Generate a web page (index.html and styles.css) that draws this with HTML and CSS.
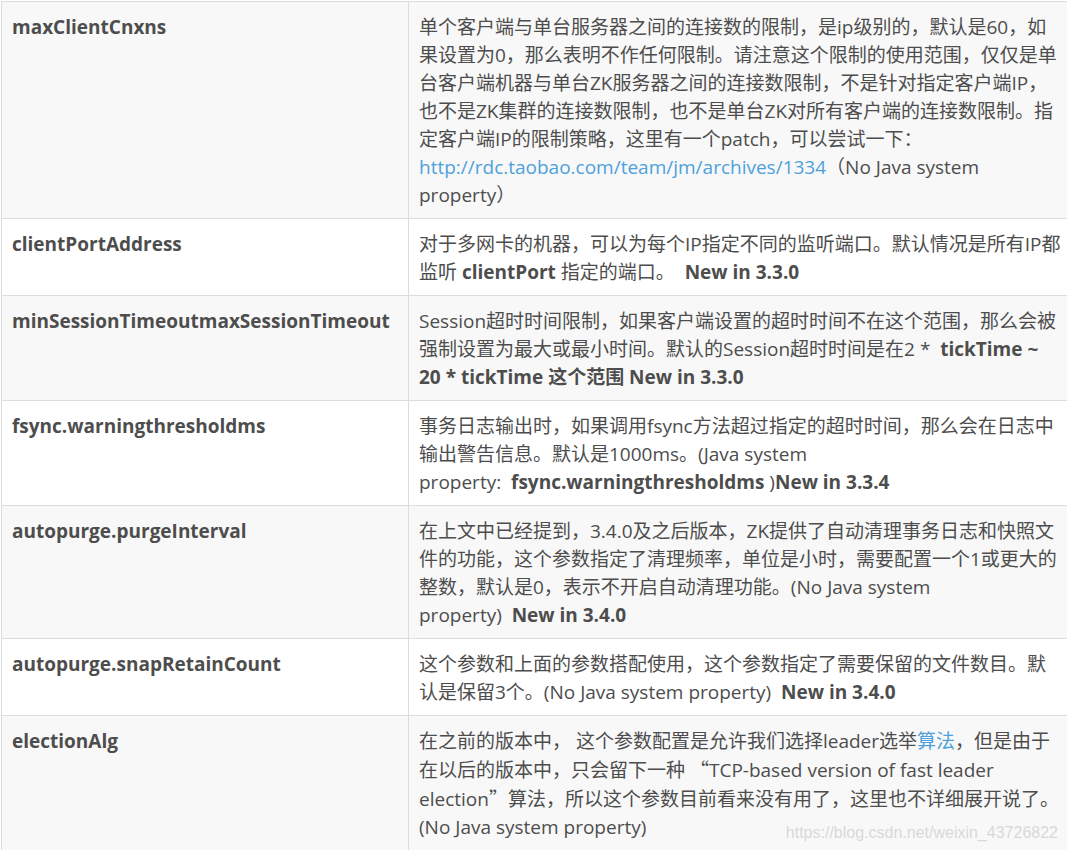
FILE: index.html
```html
<!DOCTYPE html>
<html lang="zh-CN">
<head>
    <meta charset="UTF-8">
    <meta name="viewport" content="width=device-width, initial-scale=1.0">
    <title>ZooKeeper 配置参数</title>
<link rel="stylesheet" href="styles.css">
</head>
<body>
    <div class="wrap">
        <table class="conf-table">
            <tr>
                <td class="name"><strong>maxClientCnxns</strong></td>
                <td class="desc">单个客户端与单台服务器之间的连接数的限制，是ip级别的，默认是60，如果设置为0，那么表明不作任何限制。请注意这个限制的使用范围，仅仅是单台客户端机器与单台ZK服务器之间的连接数限制，不是针对指定客户端IP，也不是ZK集群的连接数限制，也不是单台ZK对所有客户端的连接数限制。指定客户端IP的限制策略，这里有一个patch，可以尝试一下：<a href="#">http://rdc.taobao.com/team/jm/archives/1334</a>（No Java system property）</td>
            </tr>
            <tr>
                <td class="name"><strong>clientPortAddress</strong></td>
                <td class="desc">对于多网卡的机器，可以为每个IP指定不同的监听端口。默认情况是所有IP都监听 <strong>clientPort</strong> 指定的端口。&nbsp; <strong>New in 3.3.0</strong></td>
            </tr>
            <tr>
                <td class="name"><strong>minSessionTimeoutmaxSessionTimeout</strong></td>
                <td class="desc">Session超时时间限制，如果客户端设置的超时时间不在这个范围，那么会被强制设置为最大或最小时间。默认的Session超时时间是在2 *&nbsp; <strong>tickTime ~ 20 * tickTime 这个范围 New in 3.3.0</strong></td>
            </tr>
            <tr>
                <td class="name"><strong>fsync.warningthresholdms</strong></td>
                <td class="desc">事务日志输出时，如果调用fsync方法超过指定的超时时间，那么会在日志中输出警告信息。默认是1000ms。(Java system property:&nbsp;&nbsp;<strong>fsync.warningthresholdms</strong>&nbsp;)<strong>New&nbsp;in&nbsp;3.3.4</strong></td>
            </tr>
            <tr>
                <td class="name"><strong>autopurge.purgeInterval</strong></td>
                <td class="desc">在上文中已经提到，3.4.0及之后版本，ZK提供了自动清理事务日志和快照文件的功能，这个参数指定了清理频率，单位是小时，需要配置一个1或更大的整数，默认是0，表示不开启自动清理功能。(No Java system property)&nbsp;&nbsp;<strong>New&nbsp;in&nbsp;3.4.0</strong></td>
            </tr>
            <tr>
                <td class="name"><strong>autopurge.snapRetainCount</strong></td>
                <td class="desc">这个参数和上面的参数搭配使用，这个参数指定了需要保留的文件数目。默认是保留3个。(No Java system property)&nbsp; <strong>New in 3.4.0</strong></td>
            </tr>
            <tr>
                <td class="name"><strong>electionAlg</strong></td>
                <td class="desc">在之前的版本中， 这个参数配置是允许我们选择leader选举<a href="#">算法</a>，但是由于在以后的版本中，只会留下一种 <span class="cjk">“</span>TCP-based version of fast leader election<span class="cjk">”</span>算法，所以这个参数目前看来没有用了，这里也不详细展开说了。(No Java system property)</td>
            </tr>
        </table>
        <span class="watermark">https://blog.csdn.net/weixin_43726822</span>
    </div>
</body>
</html>
```

FILE: styles.css
```css
/* 配置参数表 */
body {
    margin: 0;
    padding: 1px 0 0 1px;
    background-color: white;
    font-family: "Open Sans", "Noto Sans CJK SC", sans-serif;
    font-size: 19px;
    color: #4d4d4d;
    overflow: hidden;
}

.wrap {
    position: relative;
    width: 1067px;
}

.conf-table {
    width: 100%;
    border-collapse: collapse;
    table-layout: fixed;
}

.conf-table td {
    border: 1px solid #dddddd;
    padding: 11px 10px 9px 10px;
    line-height: 28px;
    vertical-align: top;
}

.conf-table td.desc {
    padding-right: 4px;
}

.conf-table tr:nth-child(odd) td {
    background-color: #f8f8f8;
}

.conf-table td.name {
    width: 386px;
}

.conf-table strong {
    font-weight: bold;
}

.conf-table a {
    color: #4ea1db;
    text-decoration: none;
}

.cjk {
    font-family: "Noto Sans CJK SC", sans-serif;
}

.watermark {
    position: absolute;
    right: 10px;
    bottom: 9px;
    font-family: "Liberation Sans", Arial, sans-serif;
    font-size: 16px;
    color: #d8d8d8;
}
```
